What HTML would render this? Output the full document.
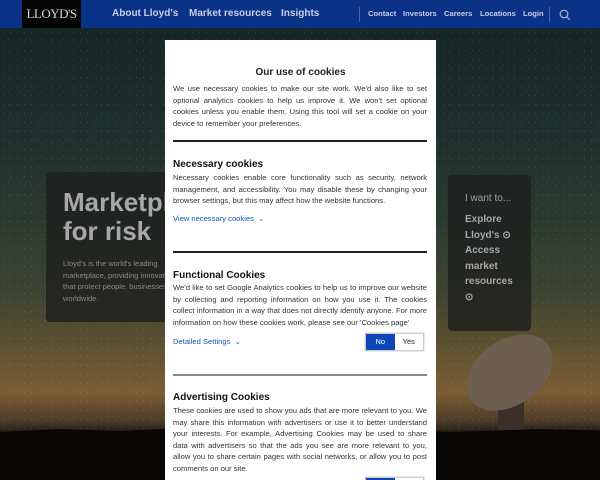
<!DOCTYPE html>
<html><head><style>
*{margin:0;padding:0;box-sizing:border-box}
html{width:600px;height:480px;overflow:hidden}
body{width:600px;height:480px;overflow:hidden;position:relative;font-family:"Liberation Sans",sans-serif;
background:linear-gradient(180deg,#142424 0%,#1c2e2c 25%,#2a3a30 45%,#3e4430 62%,#6a5632 76%,#7a5c34 82%,#4a3a26 88%,#0a0908 91%,#050505 100%);}
.stars{position:absolute;inset:28px 0 0 0;background-image:radial-gradient(#fff 0.5px,transparent 0.8px),radial-gradient(#cde 0.5px,transparent 0.8px);background-size:7px 9px,11px 13px;background-position:0 0,3px 5px;opacity:.1}
.mtn{position:absolute;left:0;right:0;top:428px;bottom:0;background:#070605;clip-path:polygon(0 8%,10% 2%,20% 6%,30% 0,45% 5%,60% 3%,75% 8%,90% 2%,100% 5%,100% 100%,0 100%)}
nav{position:absolute;top:0;left:0;width:600px;height:28px;background:#0a3286;color:#c8d2e8}
.logo{position:absolute;left:22px;top:0;width:59px;height:28px;background:#050505;color:#d8d8d8;font-family:"Liberation Serif",serif;font-size:13px;line-height:28px;text-align:center;letter-spacing:-0.5px}
.m{position:absolute;top:8px;font-size:10px;font-weight:bold;color:#c5cfe6}
.s{position:absolute;top:9px;font-size:7.6px;font-weight:bold;color:#c5cfe6}
.sep{position:absolute;top:7px;width:1px;height:15px;background:#4a66aa}
.hero{position:absolute;left:46px;top:172px;width:140px;height:150px;background:rgba(30,32,30,.82);border-radius:4px;padding:16px 17px;color:#9a9a9a}
.hero h1{font-size:26px;line-height:29px;white-space:nowrap;font-weight:bold;color:#a8a8a8}
.hero p{font-size:7.5px;line-height:11.5px;margin-top:12px;white-space:nowrap;color:#8a8a8a}
.want{position:absolute;left:448px;top:175px;width:83px;height:156px;background:rgba(30,32,30,.82);border-radius:4px;padding:18px 17px;color:#a0a0a0;font-size:10px}
.want b{display:block;line-height:15.5px;margin-top:8px;color:#a8a8a8}
.dish{position:absolute;left:462px;top:340px;width:95px;height:65px;background:#6e5e50;border-radius:50%;transform:rotate(-35deg)}
.leg{position:absolute;left:498px;top:395px;width:26px;height:40px;background:#3a3028}
.modal{position:absolute;left:165px;top:40px;width:271px;height:440px;overflow:hidden;background:#fff;padding:0 9px 0 8px;color:#222;font-size:7.6px;line-height:11.5px}
.modal h2{font-size:10px;font-weight:bold;text-align:center;position:absolute;left:0;right:0;top:27px}
.modal h3{position:absolute;left:8px;font-size:10px;font-weight:bold;color:#111}
.t{position:absolute;left:8px;width:254px;text-align:justify;color:#333}
.lk{position:absolute;left:8px;color:#1a54b8;font-size:7.6px}
.hr{position:absolute;left:8px;width:254px;height:1.5px;background:#222}
.btn{position:absolute;left:200px;width:59px;height:18px;border:1px solid #ccc;display:flex;font-size:7.5px;box-shadow:0 0 1px #999}
.btn span{flex:1;text-align:center;line-height:16px}
.btn .n{background:#0d47b8;color:#fff}
</style></head><body>
<div class="stars"></div>
<div class="leg"></div>
<div class="dish"></div>
<div class="mtn"></div>
<nav>
<div class="logo">LLOYD'S</div>
<div class="m" style="left:112px">About Lloyd's</div>
<div class="m" style="left:189px">Market resources</div>
<div class="m" style="left:281px">Insights</div>
<div class="sep" style="left:359px"></div>
<div class="s" style="left:368px">Contact</div>
<div class="s" style="left:403px">Investors</div>
<div class="s" style="left:444px">Careers</div>
<div class="s" style="left:480px">Locations</div>
<div class="s" style="left:523px">Login</div>
<div class="sep" style="left:549px"></div>
<svg style="position:absolute;left:559px;top:9px" width="12" height="12" viewBox="0 0 12 12"><circle cx="5" cy="5" r="3.8" fill="none" stroke="#aab8d8" stroke-width="1.2"/><path d="M8 8l3 3" stroke="#aab8d8" stroke-width="1.2"/></svg>
</nav>
<div class="hero"><h1>Marketplace<br>for risk</h1><p>Lloyd's is the world's leading<br>marketplace, providing innovative<br>that protect people, businesses<br>worldwide.</p></div>
<div class="want">I want to...<b>Explore<br>Lloyd's ⊙<br>Access<br>market<br>resources<br>⊙</b></div>
<div class="modal">
<h2>Our use of cookies</h2>
<div class="t" style="top:43px">We use necessary cookies to make our site work. We'd also like to set optional analytics cookies to help us improve it. We won't set optional cookies unless you enable them. Using this tool will set a cookie on your device to remember your preferences.</div>
<div class="hr" style="top:100px"></div>
<h3 style="top:119px">Necessary cookies</h3>
<div class="t" style="top:132px">Necessary cookies enable core functionality such as security, network management, and accessibility. You may disable these by changing your browser settings, but this may affect how the website functions.</div>
<div class="lk" style="top:173px">View necessary cookies &nbsp;⌄</div>
<div class="hr" style="top:211px"></div>
<h3 style="top:230px">Functional Cookies</h3>
<div class="t" style="top:242px">We'd like to set Google Analytics cookies to help us to improve our website by collecting and reporting information on how you use it. The cookies collect information in a way that does not directly identify anyone. For more information on how these cookies work, please see our 'Cookies page'</div>
<div class="lk" style="top:296px">Detailed Settings &nbsp;⌄</div>
<div class="btn" style="top:293px"><span class="n">No</span><span>Yes</span></div>
<div class="hr" style="top:334px;background:#888"></div>
<h3 style="top:352px">Advertising Cookies</h3>
<div class="t" style="top:365px">These cookies are used to show you ads that are more relevant to you. We may share this information with advertisers or use it to better understand your interests. For example, Advertising Cookies may be used to share data with advertisers so that the ads you see are more relevant to you, allow you to share certain pages with social networks, or allow you to post comments on our site.</div>
<div class="btn" style="top:437px"><span class="n">No</span><span>Yes</span></div>
</div>
</body></html>
